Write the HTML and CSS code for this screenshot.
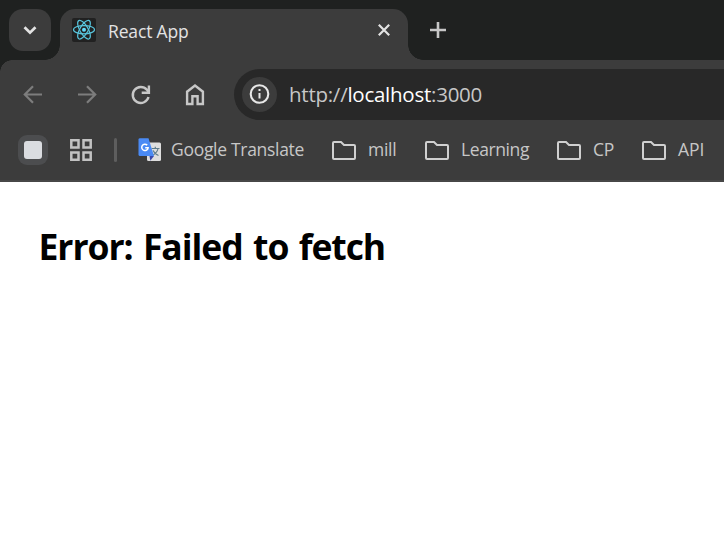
FILE: index.html
```html
<!DOCTYPE html>
<html lang="en">
<head>
<meta charset="utf-8">
<title>React App</title>
<link rel="stylesheet" href="styles.css">
</head>
<body>
<div class="browser">
  <header class="tabstrip">
    <button class="tab-search" aria-label="Search tabs"><svg width="42" height="42" viewBox="0 0 42 42"><path d="M15.5 18.2l5.5 5.5 5.5-5.5" fill="none" stroke="#e3e3e3" stroke-width="2.7"/></svg></button>
    <div class="tab">
      <svg class="favicon" width="24" height="24" viewBox="0 0 24 24"><rect width="24" height="24" rx="2" fill="#212121"/><g fill="none" stroke="#58c4dc" stroke-width="1.2"><ellipse cx="12" cy="11.7" rx="10.5" ry="4.1"/><ellipse cx="12" cy="11.7" rx="10.5" ry="4.1" transform="rotate(60 12 11.7)"/><ellipse cx="12" cy="11.7" rx="10.5" ry="4.1" transform="rotate(120 12 11.7)"/></g><circle cx="12" cy="11.7" r="2" fill="#61dafb"/></svg>
      <span class="tab-title">React App</span>
      <svg class="close" width="12" height="12" viewBox="0 0 12 12"><path d="M.8.8l10.4 10.4M11.2.8L.8 11.2" stroke="#e3e3e3" stroke-width="2.2"/></svg>
    </div>
    <svg class="new-tab" width="16" height="16" viewBox="0 0 16 16"><path d="M8 0v16M0 8h16" stroke="#c7c7c7" stroke-width="2.6"/></svg>
  </header>
  <nav class="toolbar">
    <svg class="tool" width="54" height="54" viewBox="0 0 54 54"><path d="M36 26.5H19M27 18.3l-8.2 8.2 8.2 8.2" fill="none" stroke="#7d7d7d" stroke-width="2.2"/></svg>
    <svg class="tool" width="54" height="54" viewBox="0 0 54 54"><path d="M18 26.5h17M27 18.3l8.2 8.2-8.2 8.2" fill="none" stroke="#7d7d7d" stroke-width="2.2"/></svg>
    <svg class="tool" width="54" height="54" viewBox="0 0 54 54"><path d="M34.5 29a8 8 0 1 1-1.6-7.2l2 2.1M34.9 17.5v7.2h-7.2" fill="none" stroke="#c7c7c7" stroke-width="2.4"/></svg>
    <svg class="tool" width="54" height="54" viewBox="0 0 54 54"><path d="M19.1 36V23.7L27 17.6l7.9 6.1V36h-5.3v-7.8h-5.2V36z" fill="none" stroke="#c7c7c7" stroke-width="2.4"/></svg>
    <div class="omnibox">
      <svg class="info" width="35" height="35" viewBox="0 0 35 35"><circle cx="17.5" cy="17.5" r="17.5" fill="#3c3c3c"/><circle cx="17.5" cy="17" r="8.8" fill="none" stroke="#e8e8e8" stroke-width="2.1"/><path d="M17.5 16v5.5M17.5 12v2" stroke="#e8e8e8" stroke-width="2"/></svg>
      <span class="url">http://<span class="host">localhost</span>:3000</span>
    </div>
  </nav>
  <nav class="bookmarks">
    <span class="group"><i></i></span>
    <svg class="apps" width="22" height="22" viewBox="0 0 22 22"><g fill="none" stroke="#c2c2c2" stroke-width="2.5"><path d="M1.3 1.3h7.2v7.2H1.3zM13.5 1.3h7.2v7.2h-7.2zM1.3 13.5h7.2v7.2H1.3zM13.5 13.5h7.2v7.2h-7.2z"/></g></svg>
    <span class="divider"></span>
    <a class="bookmark translate"><svg width="24" height="24" viewBox="0 0 24 24"><rect x="9" y="4.5" width="14" height="18.5" rx="1.5" fill="#dedede"/><path d="M13.5 10.5h8M17.3 8.7v1.8M20 10.5c-.6 3-2.8 5.4-5.2 6.7M15.1 12.4c1 2.5 3.2 4.2 5.4 5.1" fill="none" stroke="#607d8b" stroke-width="1.2"/><path d="M11.5 18h4.5l-3.7 4.7z" fill="#3949ab"/><path d="M2 .2h8.5L16 18H2Q.5 18 .5 16.5v-15Q.5.2 2 .2z" fill="#4a8af4"/><path d="M9.2 7.1a3.2 3.2 0 1 0 .9 2.7H7.2" fill="none" stroke="#fff" stroke-width="1.5"/></svg><span>Google Translate</span></a>
    <a class="bookmark mill"><svg width="24" height="19" viewBox="0 0 24 19"><path d="M2 1h7l3 3h10q1 0 1 1v12q0 1-1 1H2q-1 0-1-1V2q0-1 1-1z" fill="none" stroke="#d0d0d0" stroke-width="2"/></svg><span>mill</span></a>
    <a class="bookmark learning"><svg width="24" height="19" viewBox="0 0 24 19"><path d="M2 1h7l3 3h10q1 0 1 1v12q0 1-1 1H2q-1 0-1-1V2q0-1 1-1z" fill="none" stroke="#d0d0d0" stroke-width="2"/></svg><span>Learning</span></a>
    <a class="bookmark cp"><svg width="24" height="19" viewBox="0 0 24 19"><path d="M2 1h7l3 3h10q1 0 1 1v12q0 1-1 1H2q-1 0-1-1V2q0-1 1-1z" fill="none" stroke="#d0d0d0" stroke-width="2"/></svg><span>CP</span></a>
    <a class="bookmark api"><svg width="24" height="19" viewBox="0 0 24 19"><path d="M2 1h7l3 3h10q1 0 1 1v12q0 1-1 1H2q-1 0-1-1V2q0-1 1-1z" fill="none" stroke="#d0d0d0" stroke-width="2"/></svg><span>API</span></a>
  </nav>
  <main><h1>Error: Failed to fetch</h1></main>
</div>
</body>
</html>
```

FILE: styles.css
```css
* { box-sizing: border-box; }
body { margin: 0; background: #fff; font-family: "Open Sans", "Noto Sans", sans-serif; }
svg { display: block; flex: none; }
.browser { height: 538px; overflow: hidden; }
.tabstrip { height: 60px; background: #1f2120; display: flex; padding: 9px 0 0 9px; }
.tab-search { width: 42px; height: 42px; padding: 0; border: 0; border-radius: 14px; background: #3c3c3c; }
.tab { position: relative; width: 348px; height: 51px; margin-left: 9px; background: #3c3c3c; border-radius: 15px 15px 0 0; display: flex; align-items: flex-start; padding: 9px 18px 0 12px; }
.tab::before, .tab::after { content: ""; position: absolute; bottom: 0; width: 15px; height: 15px; }
.tab::before { left: -15px; background: radial-gradient(circle at 0 0, transparent 14.5px, #3c3c3c 15px); }
.tab::after { right: -15px; background: radial-gradient(circle at 100% 0, transparent 14.5px, #3c3c3c 15px); }
.tab-title { margin: 1px 0 0 12px; font-size: 17.5px; line-height: 24px; letter-spacing: -.15px; color: #e3e3e3; white-space: nowrap; }
.close { margin: 6px 0 0 auto; }
.new-tab { margin: 13px 0 0 22px; }
.toolbar { height: 60px; display: flex; align-items: center; padding: 9px 0 0 6px; background: radial-gradient(circle at 12px 12px, #3c3c3c 11.5px, #1f2120 12px) 0 0 / 12px 12px no-repeat, #3c3c3c; }
.omnibox { flex: 1; height: 51px; margin-left: 12px; border-radius: 26px 0 0 26px; background: #282828; display: flex; align-items: center; padding-left: 8px; }
.url { margin: 0 0 2px 12px; font-size: 20.5px; line-height: 28px; letter-spacing: -.25px; color: #c7c7c7; white-space: nowrap; }
.host { color: #fff; }
.bookmarks { height: 62px; background: #3c3c3c; border-bottom: 2px solid #474747; display: flex; align-items: center; padding-left: 18px; color: #c7c7c7; }
.group { width: 30px; height: 30px; border-radius: 9px; background: #4c4d4f; display: grid; place-items: center; }
.group i { width: 18px; height: 18px; border-radius: 3px; background: #dadce0; }
.apps { margin-left: 22px; }
.divider { width: 3px; height: 24px; margin-left: 22px; border-radius: 2px; background: #5e5e5e; }
.bookmark { display: flex; align-items: center; flex: none; font-size: 17.5px; line-height: 24px; white-space: nowrap; letter-spacing: -.3px; }
.bookmark span { margin-bottom: 2px; }
.translate { width: 173px; margin-left: 21px; gap: 9px; }
.mill, .learning, .cp, .api { gap: 12px; margin-left: 21px; }
.mill { width: 72px; }
.learning { width: 111px; letter-spacing: -.4px; }
.cp { width: 64px; }
.api { letter-spacing: 0; }
main { padding: 41px 38.5px; }
h1 { margin: 0; font-size: 35.5px; line-height: 46px; font-weight: 700; letter-spacing: -1.05px; word-spacing: 2.2px; color: #000; white-space: nowrap; }
```
